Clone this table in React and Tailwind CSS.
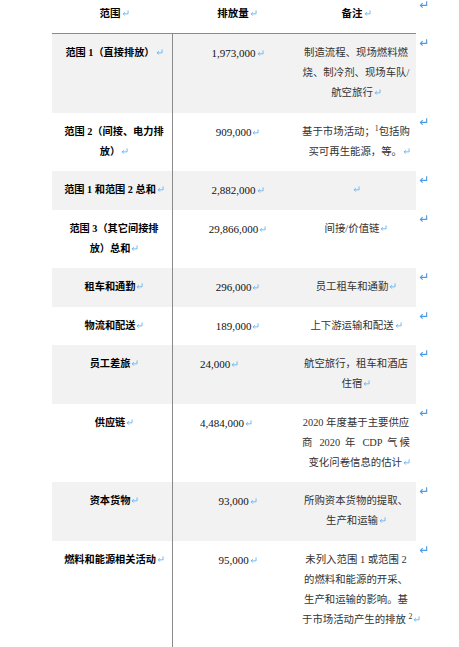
import React from 'react'

const GRAY = 'bg-[#f2f2f2]'
const WHITE = 'bg-white'

// small return mark at the end of each cell
function CellMark() {
  return (
    <svg
      viewBox="0 0 8 7"
      className="inline-block w-[7px] h-[6px] ml-[1px] align-[1px]"
      fill="none"
      stroke="#6fb6f0"
      strokeWidth="1.1"
    >
      <path d="M7 0.5V4.5H1.2" />
      <path d="M3.2 2.5L1.2 4.5L3.2 6.5" />
    </svg>
  )
}

// bigger mark at the end of each row, outside the table
function RowMark() {
  return (
    <svg
      viewBox="0 0 10 8"
      className="block w-[9px] h-[7px]"
      fill="none"
      stroke="#4d9de4"
      strokeWidth="1.3"
    >
      <path d="M8.6 0.3V5H1.5" />
      <path d="M4 2.5L1.5 5L4 7.5" />
    </svg>
  )
}

const ALIGN = {
  c: 'text-center',
  r: 'text-right',
  l: 'text-left',
  j: 'text-justify [text-align-last:justify]',
}

const rows = [
  {
    bg: GRAY,
    c1: ['范围 1（直接排放）'],
    c2: '1,973,000',
    c3: [
      ['制造流程、现场燃料燃', 'c'],
      ['烧、制冷剂、现场车队/', 'c'],
      ['航空旅行', 'c'],
    ],
  },
  {
    bg: WHITE,
    c1: ['范围 2（间接、电力排', '放）'],
    c2: '909,000',
    c3: [
      [<>基于市场活动；<sup>1</sup>包括购</>, 'c'],
      ['买可再生能源，等。', 'r'],
    ],
  },
  {
    bg: GRAY,
    c1: ['范围 1 和范围 2 总和'],
    c2: '2,882,000',
    c3: [['', 'c']],
  },
  {
    bg: WHITE,
    c1: ['范围 3（其它间接排', '放）总和'],
    c2: '29,866,000',
    c3: [['间接/价值链', 'c']],
  },
  {
    bg: GRAY,
    c1: ['租车和通勤'],
    c2: '296,000',
    c3: [['员工租车和通勤', 'c']],
  },
  {
    bg: WHITE,
    c1: ['物流和配送'],
    c2: '189,000',
    c3: [['上下游运输和配送', 'c']],
  },
  {
    bg: GRAY,
    c1: ['员工差旅'],
    c2: '24,000',
    left: true,
    c3: [
      ['航空旅行，租车和酒店', 'c'],
      ['住宿', 'c'],
    ],
  },
  {
    bg: WHITE,
    c1: ['供应链'],
    c2: '4,484,000',
    left: true,
    c3: [
      ['2020 年度基于主要供应', 'c'],
      ['商 2020 年 CDP 气候', 'j'],
      ['变化问卷信息的估计', 'r'],
    ],
  },
  {
    bg: GRAY,
    c1: ['资本货物'],
    c2: '93,000',
    c3: [
      ['所购资本货物的提取、', 'c'],
      ['生产和运输', 'c'],
    ],
  },
  {
    bg: WHITE,
    c1: ['燃料和能源相关活动'],
    c2: '95,000',
    last: true,
    c3: [
      ['未列入范围 1 或范围 2', 'c'],
      ['的燃料和能源的开采、', 'c'],
      ['生产和运输的影响。基', 'c'],
      [<>于市场活动产生的排放 <sup>2</sup></>, 'l'],
    ],
  },
]

function Lines({ lines }) {
  return lines.map((line, i) => (
    <div key={i} className="whitespace-nowrap leading-[20px]">
      {line}
      {i === lines.length - 1 && <CellMark />}
    </div>
  ))
}

export default function App() {
  return (
    <div className="min-h-screen bg-white pl-[52px] font-['Liberation_Serif','Noto_Sans_CJK_SC',serif]">
      {/* ── Header ── */}
      <div className="flex">
        <div className="flex w-[364px] h-[34px] border-b border-[#8a8a8a] pt-[4px] text-[10.5px] leading-[20px] font-bold text-black">
          <div className="w-[120px] pl-[6px] pr-[2px] text-center">范围<CellMark /></div>
          <div className="w-[130px] text-center">排放量<CellMark /></div>
          <div className="w-[114px] pr-[6px] text-center">备注<CellMark /></div>
        </div>
        <div className="pl-[3px] pt-[1px]"><RowMark /></div>
      </div>

      {/* ── Body rows ── */}
      {rows.map((r, idx) => {
        const pad = r.last ? 'pt-[9px] pb-[40px]' : 'pt-[9px] pb-[9.5px]'
        return (
          <div key={idx} className="flex">
            <div className={`flex w-[364px] ${r.bg}`}>
              <div className={`w-[120px] pl-[6px] pr-[2px] ${pad} text-center text-[10.2px] leading-[20px] font-bold text-black`}>
                <Lines lines={r.c1} />
              </div>
              <div className={`w-[130px] border-l border-[#8a8a8a] ${pad} text-[11px] leading-[20px] text-[#111] ${r.left ? 'pl-[27px] text-left' : 'text-center'}`}>
                <div className="whitespace-nowrap leading-[20px]">{r.c2}<CellMark /></div>
              </div>
              <div className={`w-[114px] pr-[6px] ${pad} text-[10.4px] leading-[20px] text-[#333]`}>
                {r.c3.map(([t, a], i) => (
                  <div key={i} className={`whitespace-nowrap leading-[20px] ${ALIGN[a]}`}>
                    {t}
                    {i === r.c3.length - 1 && <CellMark />}
                  </div>
                ))}
              </div>
            </div>
            <div className="pl-[3px] pt-[5px]"><RowMark /></div>
          </div>
        )
      })}
    </div>
  )
}
